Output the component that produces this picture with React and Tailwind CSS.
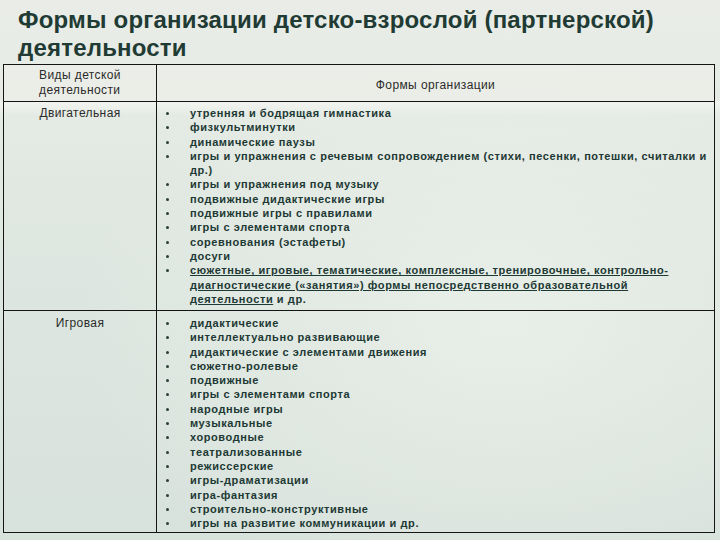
import React from 'react';

const MOTOR = [
  'утренняя и бодрящая гимнастика',
  'физкультминутки',
  'динамические паузы',
  ['игры и упражнения с речевым сопровождением (стихи, песенки, потешки, считалки и', 'др.)'],
  'игры и упражнения под музыку',
  'подвижные дидактические игры',
  'подвижные игры с правилами',
  'игры с элементами спорта',
  'соревнования (эстафеты)',
  'досуги',
];

const GAME = [
  'дидактические',
  'интеллектуально развивающие',
  'дидактические с элементами движения',
  'сюжетно-ролевые',
  'подвижные',
  'игры с элементами спорта',
  'народные игры',
  'музыкальные',
  'хороводные',
  'театрализованные',
  'режиссерские',
  'игры-драматизации',
  'игра-фантазия',
  'строительно-конструктивные',
  'игры на развитие коммуникации и др.',
];

const Item = ({ children }) => (
  <li className="flex">
    <span className="w-[33px] pl-[9px] shrink-0 flex items-start pt-[6px]">
      <span className="block w-[3px] h-[3px] rounded-full bg-[#2a3f3a]" />
    </span>
    <span className="whitespace-nowrap">{children}</span>
  </li>
);

const List = ({ items, children }) => (
  <ul className="text-[11px] leading-[14.3px] font-bold tracking-[0.58px] text-[#1d3934]">
    {items.map((it, i) => (
      <Item key={i}>
        {Array.isArray(it) ? (
          <>{it[0]}<br />{it[1]}</>
        ) : it}
      </Item>
    ))}
    {children}
  </ul>
);

export default function App() {
  return (
    <div
      className="w-[720px] h-[540px] overflow-hidden relative bg-gradient-to-b from-[#eaede7] via-[#dde6e0] to-[#d8e2dc]"
      style={{ fontFamily: '"Liberation Sans", Arial, sans-serif' }}
    >
      {/* soft light streaks of the slide background */}
      <div className="absolute inset-0 bg-[radial-gradient(ellipse_at_70%_60%,rgba(238,242,236,0.7),transparent_60%)]" />
      <div className="absolute left-0 right-0 top-[101px] h-[14px] bg-gradient-to-b from-[#f3f5f0] to-transparent" />

      <div className="relative">
        <h1 className="pl-[18px] pt-[6px] text-[24px] leading-[28px] font-bold text-[#1f3b34] tracking-[0.2px]">
          Формы организации детско-взрослой (партнерской)<br />деятельности
        </h1>

        <div className="ml-[3px] mt-[2px] w-[712px] border border-[#151515]">
          {/* header */}
          <div className="flex h-[37px] border-b border-[#151515] bg-[#eef0ea]/60">
            <div className="w-[153px] border-r border-[#151515] flex items-center justify-center text-[12px] leading-[15px] text-[#2b2b2b] tracking-[0.4px]">
              <div>Виды детской<br />деятельности</div>
            </div>
            <div className="flex-1 flex items-center justify-center pt-[4px] text-[12px] text-[#2b2b2b] tracking-[0.4px]">
              Формы организации
            </div>
          </div>

          {/* motor activity */}
          <div className="flex h-[209px] border-b border-[#151515]">
            <div className="w-[153px] border-r border-[#151515] pt-[4px] text-center text-[12px] leading-[14.3px] text-[#2b2b2b] tracking-[0.4px]">
              Двигательная
            </div>
            <div className="flex-1 pt-[4px]">
              <List items={MOTOR}>
                <Item>
                  <span className="underline">сюжетные, игровые, тематические, комплексные, тренировочные, контрольно-</span>
                  <br />
                  <span className="underline">диагностические («занятия») формы непосредственно образовательной</span>
                  <br />
                  <span className="underline">деятельности</span> и др.
                </Item>
              </List>
            </div>
          </div>

          {/* game activity */}
          <div className="flex h-[221px]">
            <div className="w-[153px] border-r border-[#151515] pt-[5px] text-center text-[12px] leading-[14.3px] text-[#2b2b2b] tracking-[0.4px]">
              Игровая
            </div>
            <div className="flex-1 pt-[5px]">
              <List items={GAME} />
            </div>
          </div>
        </div>
      </div>
    </div>
  );
}
